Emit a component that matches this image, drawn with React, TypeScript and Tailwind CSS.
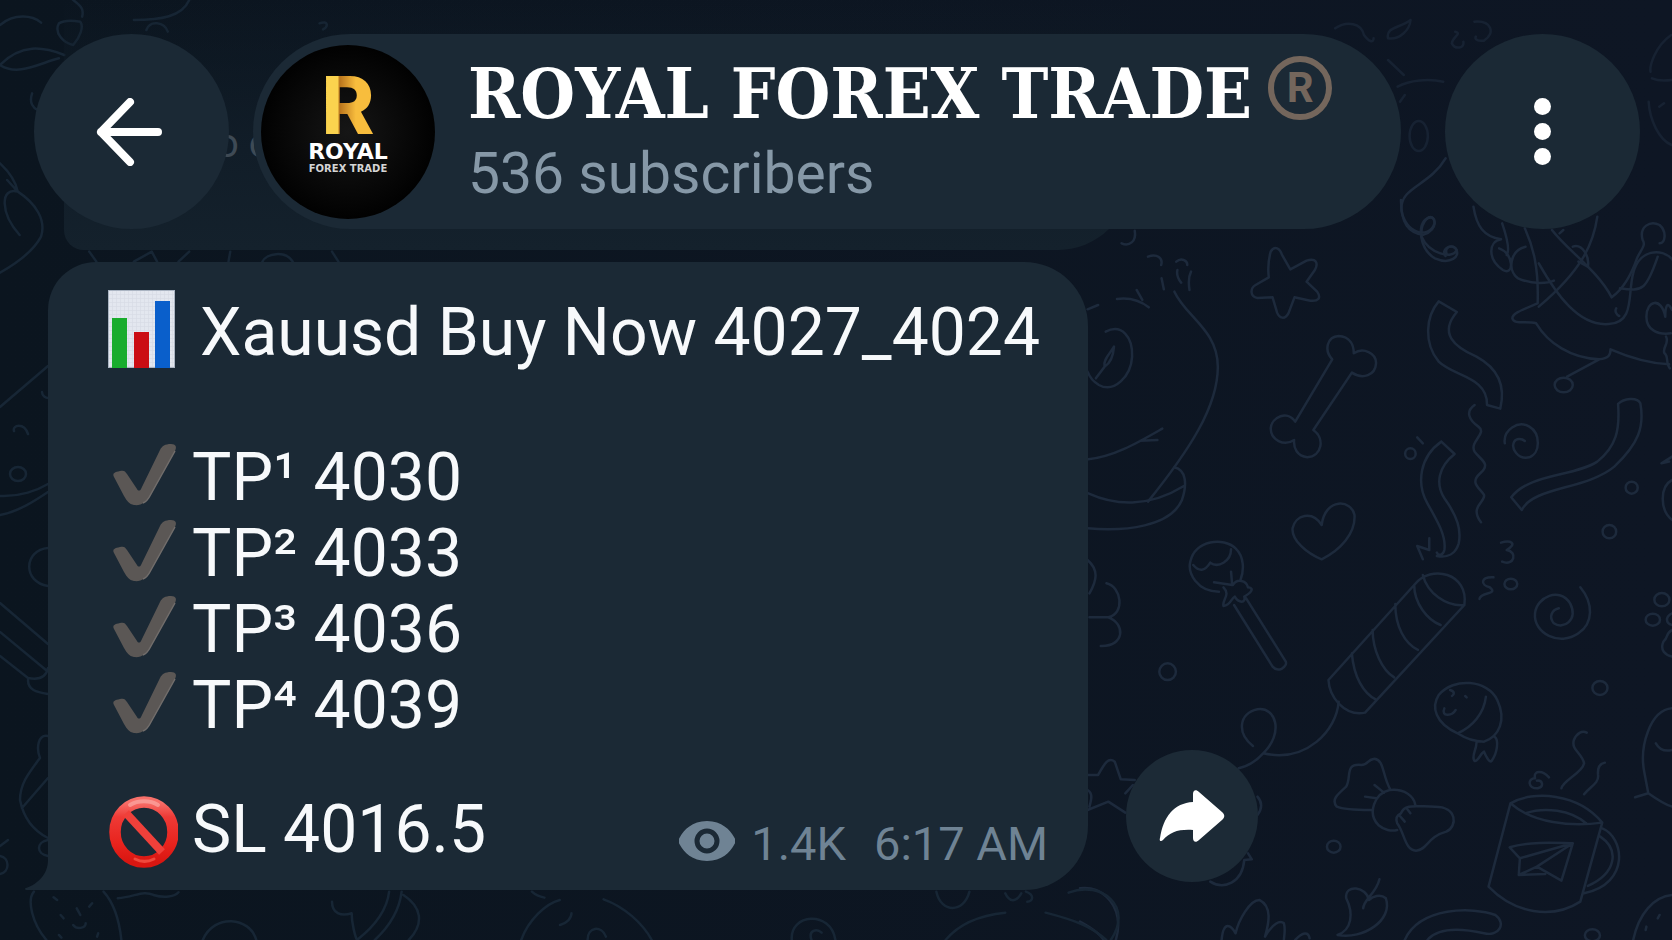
import React from 'react';

interface Target {
  level: string;
  price: string;
}

const targets: Target[] = [
  { level: '¹', price: '4030' },
  { level: '²', price: '4033' },
  { level: '³', price: '4036' },
  { level: '⁴', price: '4039' },
];

const ChartIcon = () => (
  <svg viewBox="0 0 68 78" className="h-[78px] w-[68px]" aria-hidden="true">
    <defs>
      <pattern id="chartGrid" width="4" height="4" patternUnits="userSpaceOnUse">
        <path d="M4 0H0V4" fill="none" stroke="#d3d8e2" strokeWidth="1" />
      </pattern>
    </defs>
    <rect width="67" height="78" fill="#e3e7ef" />
    <rect width="67" height="78" fill="url(#chartGrid)" />
    <rect x="0.5" y="0.5" width="66" height="77" fill="none" stroke="#aab4c2" />
    <rect x="4" y="28" width="15" height="50" fill="#19ac2d" />
    <rect x="26" y="42" width="15" height="36" fill="#cb0d13" />
    <rect x="47" y="11" width="15" height="67" fill="#0a5fcb" />
  </svg>
);

const CheckIcon = () => (
  <svg viewBox="0 0 70 64" className="h-[70px] w-[70px] pb-1.5" aria-hidden="true">
    <path
      d="M6 34C4 30 7 29 12 28C16 27 17 28 19 31L29 46C30 48 32 48 33 46L52 7C54 3 57 1 63 1C68 1 69 4 67 8L43 51C39 59 33 63 26 62C21 61 19 58 16 53Z"
      fill="#5b5755"
    />
    <path d="M67 8L43 51C41 55 38 59 35 60" fill="none" stroke="#716d6b" strokeWidth="1.5" />
  </svg>
);

const BanIcon = () => (
  <svg viewBox="0 0 70 72" className="h-[76px] w-[70px] pt-1" aria-hidden="true">
    <defs>
      <linearGradient id="banRed" x1="0" y1="0" x2="0" y2="1">
        <stop offset="0" stopColor="#f8706a" />
        <stop offset="0.25" stopColor="#ee3a36" />
        <stop offset="0.7" stopColor="#e8231d" />
        <stop offset="1" stopColor="#d91611" />
      </linearGradient>
    </defs>
    <ellipse cx="36" cy="36" rx="29" ry="30" fill="none" stroke="url(#banRed)" strokeWidth="11.5" />
    <path d="M18 17L54 56" stroke="#f0403a" strokeWidth="8" />
    <path d="M22 9C30 4 42 4 50 9" fill="none" stroke="#fba9a5" strokeWidth="4" strokeLinecap="round" opacity="0.7" />
    <path d="M27 63C33 66 40 66 46 63" fill="none" stroke="#ff6a5a" strokeWidth="3" strokeLinecap="round" opacity="0.6" />
  </svg>
);

const Wallpaper = () => (
  <svg
    viewBox="0 0 1672 940"
    preserveAspectRatio="xMidYMid slice"
    className="absolute inset-0 h-full w-full [&_ellipse]:[vector-effect:non-scaling-stroke] [&_path]:[vector-effect:non-scaling-stroke]"
    fill="none"
    stroke="#1d2a3c"
    strokeWidth="2.5"
    strokeLinecap="round"
    strokeLinejoin="round"
    aria-hidden="true"
  >
    {/* Upper right: face, star, bone, ribbons, bird */}
    <g transform="translate(1080 200) scale(0.3776 0.3333)">
      <path d="M250 275C280 350 365 390 365 500C365 620 290 750 180 905M22 778C90 770 150 730 218 686M160 722L205 720" />
      <path d="M68 395C110 370 140 410 138 470C135 530 90 580 50 555C35 545 25 530 20 515M90 440C80 460 60 480 65 500C80 490 88 470 90 440M65 500L42 535" />
      <path d="M22 880C90 915 180 925 275 858M250 802C280 810 285 850 270 900C240 980 120 995 20 985" />
      <path d="M20 328L48 315M98 297C130 292 155 298 182 322M150 270L165 300M180 170C205 160 220 175 215 195M216 235L222 268M255 185C270 170 285 185 284 195M258 210C255 225 262 240 268 248M294 215C285 235 288 255 290 270" />
      <path d="M110 130C130 140 150 125 145 92" />
      <path d="M505 155C515 135 530 145 535 165L557 208L600 182C625 172 632 190 622 210L600 245L628 275C640 295 630 305 610 302L568 292L552 340C542 360 528 355 522 338L510 292L470 294C450 290 450 265 465 255L500 232C497 205 500 175 505 155Z" />
      <path d="M668 478C645 450 655 410 685 408C715 410 725 435 725 460C750 440 785 460 784 490C782 525 750 540 720 518L618 690C650 715 640 770 602 772C575 768 565 745 567 720C540 740 505 720 505 685C508 650 550 630 570 665Z" />
      <path d="M640 975C615 930 570 945 563 985C560 1020 600 1060 640 1078C690 1050 730 1000 727 945C720 900 650 890 640 975Z" />
      <path d="M950 304C915 350 910 430 950 485C990 530 1080 530 1078 615L1113 626C1125 570 1115 510 1050 470C990 440 950 400 998 336Z" />
      <path d="M957 725C900 770 890 850 920 910C950 970 970 1010 965 1050C962 1065 950 1070 945 1058M957 725L992 762C950 800 940 850 965 895C1000 950 1010 990 1003 1030C995 1060 975 1075 945 1068" />
      <path d="M1045 615C1020 635 1030 660 1055 680C1080 700 1030 725 1045 755C1060 780 1090 790 1060 820C1030 850 1060 865 1070 885C1075 905 1030 920 1062 967" />
      <path d="M1125 730C1120 690 1160 660 1190 680C1220 700 1220 760 1190 772C1160 780 1140 745 1150 725C1155 715 1170 715 1178 723" />
      <path d="M1425 612C1430 690 1420 740 1370 785C1310 830 1190 820 1142 892L1170 930C1200 860 1340 870 1415 800C1480 730 1495 680 1484 610C1475 590 1440 595 1425 612Z" />
      <path d="M1178 85C1200 140 1215 200 1212 310C1170 330 1145 340 1145 355C1150 375 1180 362 1208 370C1240 430 1300 475 1375 478L1290 530M1375 478C1400 475 1405 465 1405 448C1460 475 1510 490 1560 493" />
      <path d="M1370 50C1360 130 1330 210 1215 320M1250 90C1290 150 1370 210 1408 292C1440 265 1460 225 1475 175C1485 150 1500 135 1490 120C1480 80 1510 60 1535 75C1555 95 1550 130 1535 130" />
      <path d="M1215 190C1260 280 1320 380 1400 372C1470 370 1450 280 1465 220C1480 150 1540 140 1570 180M1430 265C1490 275 1500 270 1530 170M1420 325C1415 335 1422 345 1428 348" />
      <path d="M1042 20C1050 80 1070 110 1115 118C1080 125 1080 180 1120 210C1150 230 1150 160 1110 145M1180 140C1140 150 1130 210 1160 235C1200 255 1240 250 1255 242M1118 70C1130 110 1140 150 1130 165M1270 100L1280 90M1305 140C1330 130 1350 170 1345 200L1320 185" />
      <path d="M850 0C850 70 870 100 910 104C950 90 945 40 920 55C890 70 900 150 940 175C980 195 1010 170 995 145C980 130 955 150 968 168" />
      <path d="M1568 330C1555 300 1550 320 1550 350C1540 290 1500 300 1500 350C1500 390 1530 405 1565 400M1552 410C1562 430 1540 445 1548 460C1560 470 1550 490 1562 505M1568 840C1535 860 1535 930 1568 960M1540 790L1568 770M1540 790L1560 785" />
      <ellipse cx="1281" cy="555" rx="24" ry="22" />
      <ellipse cx="1461" cy="863" rx="16" ry="18" />
      <ellipse cx="1402" cy="995" rx="18" ry="20" />
      <ellipse cx="875" cy="761" rx="14" ry="16" />
      <path d="M893 712L908 730" />
    </g>
    {/* Lower right: lollipop, cracker, candy, mug */}
    <g transform="translate(1080 500) scale(0.3776 0.3333)">
      <path d="M368 275C310 275 285 220 292 185C305 120 380 110 412 145C435 170 435 210 425 240M300 195C315 215 330 215 345 188C365 205 400 185 400 148M400 215L403 255L355 247M380 262C400 285 375 300 380 318C400 315 400 295 410 290C420 310 440 310 435 290C450 280 465 265 445 262C440 240 415 235 405 255M408 315L510 500C525 520 550 500 545 485L440 295" />
      <path d="M658 540L885 255C930 190 1030 220 1018 315L755 638C700 650 660 590 658 540ZM908 225C920 280 970 320 1018 315M885 255C885 310 920 360 955 375M835 312C835 380 860 430 895 450M775 390C775 450 800 510 832 532M720 460C725 530 750 580 785 600" />
      <path d="M685 605C680 690 600 790 485 760C540 700 520 620 470 628C420 640 415 700 458 738M485 760C465 785 440 800 420 805" />
      <path d="M1000 700C940 670 930 620 950 585C990 530 1080 540 1105 600C1130 660 1110 710 1070 725C1040 725 1020 715 1000 700ZM1075 590C1070 640 1040 680 1000 700M965 625C955 650 985 650 995 630M980 570C995 575 990 585 985 588M1020 588L1024 592M1050 728C1050 750 1035 770 1045 783C1055 785 1060 760 1070 755C1075 770 1085 790 1090 783C1105 760 1110 720 1098 710" />
      <path d="M820 865C800 820 805 780 780 776C760 778 765 795 745 795C700 790 720 830 705 860C680 885 665 900 680 920C700 930 740 930 770 930M820 870C780 880 760 940 790 975C805 990 825 995 840 990M820 870C860 865 885 890 888 915M780 855L805 878M755 890L785 895" />
      <path d="M850 940C860 910 890 920 940 920C1000 920 1000 980 970 995C920 1010 920 1050 890 1052C860 1050 860 1000 840 970C835 955 840 945 850 940ZM865 925L875 940M845 945L860 965" />
      <path d="M1140 910L1082 1160C1150 1240 1250 1260 1325 1205L1383 968C1320 880 1200 870 1140 910ZM1140 910C1200 970 1300 980 1383 968M1180 940C1230 920 1300 930 1340 970M1383 985C1440 1010 1460 1150 1335 1180M1378 1010C1430 1050 1420 1120 1345 1158" />
      <path d="M1138 1042C1190 1025 1250 1028 1305 1030L1275 1142L1210 1100L1305 1030L1165 1075ZM1165 1075L1162 1125L1210 1100M1162 1125L1232 1122" />
      <path d="M1275 865C1280 840 1330 820 1335 790C1330 760 1300 750 1308 720C1315 700 1330 690 1342 698M1335 883C1350 860 1375 850 1372 825C1370 800 1380 790 1390 788M1242 832C1225 810 1200 810 1205 835C1185 835 1185 865 1212 865C1230 860 1225 840 1210 842" />
      <path d="M1325 262C1360 310 1360 370 1320 400C1270 440 1200 400 1205 340C1210 290 1270 260 1298 310C1320 360 1280 390 1255 370C1240 350 1250 330 1268 325" />
      <path d="M1115 128C1140 120 1160 130 1130 150C1160 155 1150 200 1118 185M1095 232C1060 230 1060 255 1085 262C1110 285 1060 275 1058 297M893 138L908 178M893 138L925 150L925 115" />
      <path d="M20 180C50 210 45 240 25 280M70 250C110 260 120 340 75 352L25 352M75 352C120 370 120 440 55 438" />
      <path d="M20 825L48 825C65 790 75 770 92 785L108 838L145 840M20 930L75 905L120 938M120 880L140 855M20 870C35 880 30 900 25 920M470 890C485 910 480 930 470 945M345 1145C380 1170 430 1150 435 1080L455 1078L445 1060" />
      <path d="M0 1165C60 1155 120 1220 95 1320M0 1265C40 1290 60 1310 65 1325M375 1320C380 1260 400 1275 412 1300C420 1260 450 1200 475 1200C510 1220 500 1270 490 1310C510 1270 530 1260 540 1270C545 1290 540 1310 540 1320M570 1320C590 1295 605 1295 608 1315" />
      <path d="M793 1138C785 1180 750 1200 750 1225M765 1200C760 1160 700 1150 705 1195C725 1240 720 1290 682 1305C750 1320 830 1260 810 1195C795 1180 775 1190 765 1200" />
      <path d="M860 1320C900 1220 1040 1220 1100 1245C1130 1270 1110 1310 1070 1300C1010 1285 950 1280 920 1320M1465 1320C1480 1240 1520 1190 1568 1185M1500 1280L1498 1290M1535 1245L1530 1255" />
      <path d="M1568 625C1510 630 1480 740 1495 820L1505 880L1470 892M1505 880C1530 900 1550 915 1568 920M1525 730C1535 750 1550 755 1568 750M1568 390C1550 400 1560 410 1545 425C1535 450 1550 465 1568 470M1568 340C1550 350 1550 370 1568 375" />
      <ellipse cx="232" cy="515" rx="22" ry="25" />
      <ellipse cx="672" cy="1040" rx="18" ry="18" />
      <ellipse cx="1377" cy="564" rx="20" ry="21" />
      <ellipse cx="1141" cy="252" rx="17" ry="16" />
      <ellipse cx="1541" cy="299" rx="20" ry="20" />
      <ellipse cx="1517" cy="359" rx="19" ry="18" />
      <ellipse cx="1357" cy="1306" rx="20" ry="18" />
    </g>
    {/* Strip between the header pill and the menu button */}
    <g transform="translate(920 20) scale(0.48 0.3333)">
      <path d="M865 25C890 0 920 10 925 45C935 65 945 70 945 55M975 55C970 20 1000 25 1022 0C1020 30 1000 60 975 55M1155 5C1190 0 1200 40 1175 62C1160 65 1155 55 1158 50M1115 35C1130 40 1110 50 1108 70C1115 90 1135 85 1132 65M975 120L1008 165M995 200C1020 180 1060 175 1090 185M1000 245L1010 225" opacity="0.6" />
      <ellipse cx="1039" cy="348" rx="19" ry="45" opacity="0.6" />
      <path d="M1095 415C1060 500 1000 500 1003 570C1010 640 1060 660 1072 610C1070 570 1040 600 1045 650C1060 700 1110 720 1118 690C1110 670 1090 680 1098 705" />
      <path d="M1565 45C1530 80 1520 140 1522 155M1525 175C1540 185 1555 182 1566 180M1518 245C1520 300 1540 360 1566 375M1540 260L1550 250" opacity="0.6" />
    </g>
    {/* Left edge */}
    <g stroke="#172635">
      <g transform="scale(0.357 0.3333)">
        <path d="M0 75C40 40 90 45 115 68M0 195C60 130 120 140 180 165M0 195C50 230 110 190 165 175M165 70C150 100 180 130 205 135C225 110 235 80 225 65C200 60 180 60 165 70M205 0C230 20 235 30 230 50M375 60C450 60 510 50 530 0M410 90C420 60 460 65 470 95M895 70C920 60 920 80 905 88M90 280C80 310 95 325 105 330" />
        <path d="M0 490C30 520 45 550 50 575L20 540M50 575C0 560 0 640 55 705M50 575C100 610 130 660 115 710C90 760 30 800 0 818" />
        <path d="M250 755L270 785M375 785L425 755L440 785M530 755L500 785M645 755L640 785M735 785C745 760 800 750 820 785M930 755L948 785" />
      </g>
      <path d="M0 407L48 366M0 496C20 497 38 490 48 484M0 515C18 512 36 500 48 492M14 431C12 425 24 422 28 434M42 392C42 396 46 398 48 398M48 548C24 550 22 582 48 586M0 603L48 644M0 632L46 670M0 656L28 678C38 680 46 678 48 668M28 680C28 690 36 692 48 694M48 736C38 734 36 748 40 758C28 774 20 784 20 800C24 820 36 832 48 838M22 808L48 778M48 840C36 842 36 854 48 856M0 846L8 840M0 856C10 858 10 872 0 874" />
      <ellipse cx="18" cy="474" rx="8" ry="7" />
      <g transform="translate(0 640) scale(0.357 0.3333)">
        <path d="M95 755C75 780 90 850 130 900M290 755C320 790 335 850 340 900M150 772L160 780M250 800L258 790M170 825L178 835M215 805L225 825M205 855C215 870 240 865 240 850M165 885L172 893M275 880L272 890" />
        <path d="M330 775C380 770 400 750 430 765C460 775 490 770 500 757M568 900C600 820 700 830 718 900M930 785C930 820 955 830 985 820C985 850 995 890 1000 900C1060 850 1085 800 1090 755M1125 755C1120 800 1100 850 1050 900M1130 765C1180 800 1190 850 1145 900M1460 900C1480 840 1530 790 1568 780M1490 755C1500 765 1510 770 1525 773" />
      </g>
      <g transform="translate(560 740) scale(0.459 0.3333)">
        <path d="M95 478C140 500 180 550 200 600M60 600C60 560 90 555 100 590M0 555C15 550 25 535 25 520M505 600C500 520 590 510 600 600M548 600C540 570 560 565 570 578M820 455C830 520 880 520 892 455M840 600C870 550 920 525 970 518M1058 518C1120 540 1160 560 1190 600M1108 458C1180 420 1250 500 1200 600M970 460C980 490 995 485 1005 460M1015 455C1035 465 1030 485 1018 485M655 0L705 0" />
      </g>
    </g>
  </svg>
);

const ChatHeader = () => (
  <header className="relative z-10 flex items-center pt-[34px] pr-8 pl-[34px]">
    <button
      type="button"
      aria-label="Back"
      className="flex size-[195px] shrink-0 items-center justify-center rounded-full bg-[#1b2935] pr-1"
    >
      <svg viewBox="0 0 68 68" className="size-[68px]" fill="none" stroke="#fff" strokeWidth="8" strokeLinecap="round" strokeLinejoin="round" aria-hidden="true">
        <path d="M62 34H5M34 4L5 34L34 64" />
      </svg>
    </button>

    <div className="mr-11 ml-6 flex h-[195px] flex-1 items-center rounded-full bg-[#1b2935] pl-2">
      <div className="flex size-[174px] shrink-0 flex-col items-center rounded-full bg-[radial-gradient(circle,#161616,#000_75%)] pt-6">
        <span className="bg-linear-to-r from-[#fbd34e] from-30% via-[#b9741c] via-34% to-[#f8bd3d] to-65% bg-clip-text font-['Inter'] text-[80px] leading-[72px] font-extrabold text-transparent">
          R
        </span>
        <span className="font-['DejaVu_Sans'] text-[22px] leading-[22px] font-bold text-white">ROYAL</span>
        <span className="font-['DejaVu_Sans'] text-[10px] leading-3 font-bold text-[#d5d5d5]">FOREX TRADE</span>
      </div>

      <div className="ml-[33px] pt-1 whitespace-nowrap">
        <div className="flex items-start gap-4">
          <h1 className="font-['DejaVu_Serif_Condensed','DejaVu_Serif',serif] text-[70px] leading-[76px] font-bold text-white">
            ROYAL FOREX TRADE
          </h1>
          <span className="flex size-[64px] items-center justify-center rounded-full border-6 border-[#74665c] text-[42px] leading-none font-bold text-[#74665c]">
            R
          </span>
        </div>
        <p className="mt-1 text-[57px] leading-[76px] text-[#8698a7]">536 subscribers</p>
      </div>
    </div>

    <button
      type="button"
      aria-label="More options"
      className="flex size-[195px] shrink-0 flex-col items-center justify-center gap-2 rounded-full bg-[#1b2935]"
    >
      <span className="size-[17px] rounded-full bg-white" />
      <span className="size-[17px] rounded-full bg-white" />
      <span className="size-[17px] rounded-full bg-white" />
    </button>
  </header>
);

const SignalMessage = () => (
  <div className="relative mt-[33px] ml-12 flex items-end">
    <article className="relative w-[1040px] max-w-[80%] rounded-tl-[48px] rounded-tr-[64px] rounded-br-[64px] bg-[#1b2935] pt-[33px] pr-10 pb-3.5 pl-[60px] text-[66px] leading-[76px] whitespace-nowrap text-[#f7f9fb]">
      <svg viewBox="0 0 25 30" className="absolute bottom-0 -left-6 h-[30px] w-[25px]" aria-hidden="true">
        <path d="M24 0C24 14 14 24 2 28C0 29 1 30 3 30H25V0Z" fill="#1b2935" />
      </svg>

      <p className="flex h-[76px] items-center gap-[22px]">
        <span className="flex w-[70px] shrink-0 pb-2"><ChartIcon /></span>
        <span>Xauusd Buy Now 4027_4024</span>
      </p>

      <ul className="mt-[69px]">
        {targets.map((target) => (
          <li key={target.price} className="flex items-center gap-3.5">
            <CheckIcon />
            <span>TP{target.level} {target.price}</span>
          </li>
        ))}
      </ul>

      <div className="mt-12 flex items-end justify-between">
        <p className="flex items-center gap-3.5 pb-2">
          <BanIcon />
          <span>SL 4016.5</span>
        </p>
        <footer className="flex items-center pb-1 text-[47px] leading-[56px] text-[#6f8394]">
          <svg viewBox="0 0 56 40" className="mr-4 mb-1.5 h-10 w-14" aria-hidden="true">
            <path
              fillRule="evenodd"
              d="M28 0C43 0 51 9 55 16C57 19 57 21 55 24C51 31 43 40 28 40C13 40 5 31 1 24C-1 21 -1 19 1 16C5 9 13 0 28 0ZM28 7.500A12.500 12.500 0 1 0 28 32.500A12.500 12.500 0 1 0 28 7.500ZM28 12.500A7.500 7.500 0 1 1 28 27.500A7.500 7.500 0 1 1 28 12.500Z"
              fill="#6f8394"
            />
          </svg>
          <span className="mr-7">1.4K</span>
          <time>6:17 AM</time>
        </footer>
      </div>
    </article>

    <button
      type="button"
      aria-label="Forward message"
      className="mb-2 ml-[38px] flex size-[132px] shrink-0 items-center justify-center rounded-full bg-[#1c2a36]"
    >
      <svg viewBox="0 0 66 52" className="h-[52px] w-[66px]" aria-hidden="true">
        <path
          d="M34 12V4C34 0 37 -1 40 2L63 22C66 25 66 27 63 30L40 50C37 53 34 52 34 48V40C20 39 11 42 4 50C2 52 0 51 1 48C4 27 15 13 34 12Z"
          fill="#fff"
        />
      </svg>
    </button>
  </div>
);

const App: React.FC = () => {
  return (
    <div className="relative min-h-screen overflow-hidden bg-linear-to-r from-[#0b151f] to-[#0e1624] font-['Roboto','Liberation_Sans',sans-serif]">
      <Wallpaper />

      {/* Tail end of the previous message, scrolled under the header */}
      <div className="absolute top-0 left-16 h-[250px] w-[1066px] rounded-br-[72px] rounded-bl-[20px] bg-linear-to-b from-transparent via-[#111d28] via-60% to-[#14212c] pt-[120px] pl-[152px] text-[40px] leading-[48px] text-[#3e4a55]">
        o o
      </div>

      <ChatHeader />
      <main>
        <SignalMessage />
      </main>
    </div>
  );
};

export default App;
